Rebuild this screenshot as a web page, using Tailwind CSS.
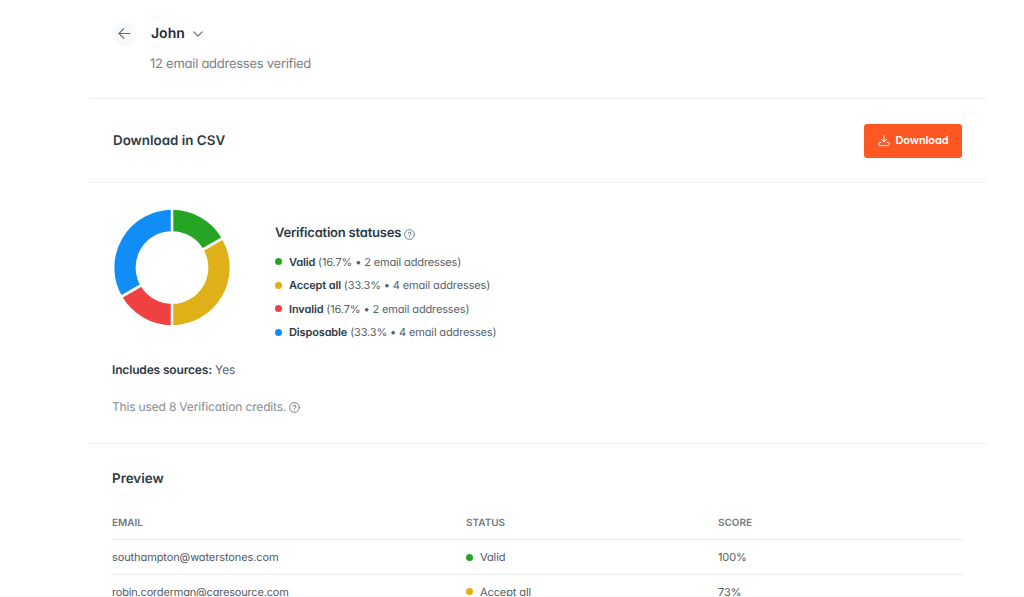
<!DOCTYPE html>
<html lang="en">
  <head>
    <meta charset="UTF-8" />
    <meta name="viewport" content="width=device-width, initial-scale=1.0" />
    <title>John - Verification results</title>
    <script src="https://cdn.jsdelivr.net/npm/@tailwindcss/browser@4"></script>
  </head>

  <body class="bg-white font-['Inter',sans-serif] [font-feature-settings:'cv11'] [text-rendering:geometricPrecision] text-[#2e3a45]">
    <div class="h-[597px] overflow-hidden border-b border-[#f8f8f9]">
      <main class="ml-[89px] w-[898px]">
        <!-- Header -->
        <header class="flex h-[99px] border-b border-[#edf0f2] pl-[23px] pt-[21px]">
          <button class="mr-[14px] flex size-[25px] shrink-0 items-center justify-center rounded-full bg-[#f7f9fa]">
            <svg class="size-[13px]" viewBox="0 0 13 13" fill="none" stroke="#6b7276" stroke-width="1.2" stroke-linecap="round" stroke-linejoin="round">
              <path d="M12 6.5H1M5.8 1.7 1 6.5l4.8 4.8" />
            </svg>
          </button>
          <div>
            <h1 class="flex h-[25px] items-center gap-2 text-[14px] font-semibold text-[#1f2b37]">
              John
              <svg class="h-[6px] w-[10px]" viewBox="0 0 10 6" fill="none" stroke="#6b7276" stroke-width="1.2" stroke-linecap="round" stroke-linejoin="round">
                <path d="M.8.8 5 5 9.2.8" />
              </svg>
            </h1>
            <p class="mt-2 -ml-px text-[13px] leading-5 tracking-[-0.26px] text-[#7b8083]">12 email addresses verified</p>
          </div>
        </header>

        <!-- Download -->
        <section class="flex h-[84px] items-center justify-between border-b border-[#f0f1f2] pl-6 pr-[25px]">
          <h2 class="pt-0.5 text-[13.4px] font-semibold">Download in CSV</h2>
          <button class="flex h-[34px] w-[98px] items-center justify-center gap-[6px] rounded-[3px] bg-[#ff5722] text-[11px] font-semibold tracking-[-0.1px] text-white">
            <svg class="size-3" viewBox="0 0 12 12" fill="none" stroke="currentColor" stroke-linecap="round" stroke-linejoin="round">
              <path d="M6 .8v5.9M3.2 4.400 6 6.900l2.800-2.500M2.900 7.500H1.700Q.6 7.500.6 8.600v.9q0 1.100 1.100 1.100h8.600q1.100 0 1.100-1.100v-.9q0-1.100-1.100-1.100H9.100" />
            </svg>
            Download
          </button>
        </section>

        <!-- Statuses -->
        <section class="h-[261px] border-b border-[#edeff0] pl-[23px] pt-[26px]">
          <div class="flex">
            <svg class="ml-[1px] size-[117px]" viewBox="-59 -58.5 117 117" fill="none">
              <g stroke-width="21.3">
                <path stroke="#26a524" d="M0-47A47 47 0 0 1 40.700-23.500" />
                <path stroke="#dfb018" d="M40.700-23.500A47 47 0 0 1 0 47" />
                <path stroke="#ef4141" d="M0 47A47 47 0 0 1-40.700 23.500" />
                <path stroke="#118df7" d="M-40.700 23.500A47 47 0 0 1 0-47" />
              </g>
              <path stroke="#fff" stroke-width="2.6" d="M0-59v24M0 35v24M30.300-17.500 51.100-29.500M-30.300 17.500-51.100 29.500" />
            </svg>
            <div class="ml-[45px] pt-[15px]">
              <h3 class="flex h-5 items-center gap-[3px] text-[13px] font-semibold tracking-[-0.22px]">
                Verification statuses
                <svg class="size-[11px]" viewBox="0 0 11 11" fill="none" stroke="#68727a" stroke-linecap="round">
                  <circle cx="5.5" cy="5.5" r="4.9" stroke-width=".9" />
                  <path d="M4.100 4.400a1.400 1.400 0 1 1 2 1.300c-.4.200-.6.400-.6.800M5.500 8v.1" />
                </svg>
              </h3>
              <ul class="mt-[6px] text-[11px] tracking-[-0.14px] text-[#56616a]">
                <li class="flex h-[23.500px] items-center gap-[7px]">
                  <span class="size-[7px] rounded-full bg-[#26a524]"></span>
                  <span><b class="font-semibold text-[#2e3a45]">Valid</b> (16.7% • 2 email addresses)</span>
                </li>
                <li class="flex h-[23.500px] items-center gap-[7px]">
                  <span class="size-[7px] rounded-full bg-[#dfb018]"></span>
                  <span><b class="font-semibold text-[#2e3a45]">Accept all</b> (33.3% • 4 email addresses)</span>
                </li>
                <li class="flex h-[23.500px] items-center gap-[7px]">
                  <span class="size-[7px] rounded-full bg-[#ef4141]"></span>
                  <span><b class="font-semibold text-[#2e3a45]">Invalid</b> (16.7% • 2 email addresses)</span>
                </li>
                <li class="flex h-[23.500px] items-center gap-[7px]">
                  <span class="size-[7px] rounded-full bg-[#118df7]"></span>
                  <span><b class="font-semibold text-[#2e3a45]">Disposable</b> (33.3% • 4 email addresses)</span>
                </li>
              </ul>
            </div>
          </div>
          <p class="mt-[16px] text-[12px] leading-5 tracking-[-0.16px] text-[#56616a]"><b class="font-semibold text-[#2e3a45]">Includes sources:</b> Yes</p>
          <p class="mt-[17px] flex items-center gap-[3px] text-[12px] leading-5 tracking-[-0.17px] text-[#868d93]">
            This used 8 Verification credits.
            <svg class="size-[11px]" viewBox="0 0 11 11" fill="none" stroke="#68727a" stroke-linecap="round">
              <circle cx="5.5" cy="5.5" r="4.9" stroke-width=".9" />
              <path d="M4.100 4.400a1.400 1.400 0 1 1 2 1.300c-.4.200-.6.400-.6.800M5.500 8v.1" />
            </svg>
          </p>
        </section>

        <!-- Preview table -->
        <section class="pl-[23px] pt-[25px]">
          <h2 class="text-[13.4px] font-semibold leading-5">Preview</h2>
          <table class="mt-[17px] w-[852px] table-fixed text-left text-[11px] tracking-[-0.1px] text-[#4f5a63]">
            <thead>
              <tr class="h-[33px] border-b border-[#ebedef] text-[10px] tracking-normal text-[#737a80]">
                <th class="w-[354px] p-0 pt-0.5 font-semibold">EMAIL</th>
                <th class="w-[252px] p-0 pt-0.5 font-semibold">STATUS</th>
                <th class="p-0 pt-0.5 font-semibold">SCORE</th>
              </tr>
            </thead>
            <tbody>
              <tr class="h-[35px] border-b border-[#ebedef]">
                <td class="p-0 pt-px">southampton@waterstones.com</td>
                <td class="p-0 pt-px"><span class="flex items-center gap-[7px]"><i class="size-[7px] rounded-full bg-[#26a524]"></i>Valid</span></td>
                <td class="p-0 pt-px">100%</td>
              </tr>
              <tr class="h-[35px]">
                <td class="p-0 tracking-[-0.18px]">robin.corderman@caresource.com</td>
                <td class="p-0"><span class="flex items-center gap-[7px]"><i class="size-[7px] rounded-full bg-[#dfb018]"></i>Accept all</span></td>
                <td class="p-0">73%</td>
              </tr>
            </tbody>
          </table>
        </section>
      </main>
    </div>
  </body>
</html>
